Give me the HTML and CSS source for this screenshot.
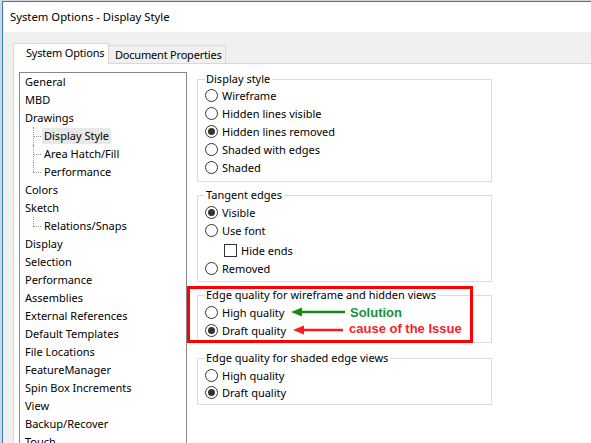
FILE: index.html
```html
<!DOCTYPE html>
<html>
<head>
<meta charset="utf-8">
<link rel="stylesheet" href="styles.css">
</head>
<body>
<div class="screen">
  <div class="window">
    <div class="titlebar">System Options - Display Style</div>
    <div class="dialog">
      <div class="tabs">
        <div class="tab active">System Options</div>
        <div class="tab">Document Properties</div>
      </div>
      <div class="page">
        <ul class="tree">
          <li>General</li>
          <li>MBD</li>
          <li>Drawings</li>
          <li class="child"><span class="sel">Display Style</span></li>
          <li class="child"><span>Area Hatch/Fill</span></li>
          <li class="child last"><span>Performance</span></li>
          <li>Colors</li>
          <li>Sketch</li>
          <li class="child last"><span>Relations/Snaps</span></li>
          <li>Display</li>
          <li>Selection</li>
          <li>Performance</li>
          <li>Assemblies</li>
          <li>External References</li>
          <li>Default Templates</li>
          <li>File Locations</li>
          <li>FeatureManager</li>
          <li>Spin Box Increments</li>
          <li>View</li>
          <li>Backup/Recover</li>
          <li>Touch</li>
        </ul>
        <div class="options">
          <fieldset class="group">
            <legend>Display style</legend>
            <div class="row"><span class="radio"></span>Wireframe</div>
            <div class="row"><span class="radio"></span>Hidden lines visible</div>
            <div class="row"><span class="radio on"></span>Hidden lines removed</div>
            <div class="row"><span class="radio"></span>Shaded with edges</div>
            <div class="row"><span class="radio"></span>Shaded</div>
          </fieldset>
          <fieldset class="group tangent">
            <legend>Tangent edges</legend>
            <div class="row"><span class="radio on"></span>Visible</div>
            <div class="row"><span class="radio"></span>Use font</div>
            <div class="row indent"><span class="check"></span>Hide ends</div>
            <div class="row"><span class="radio"></span>Removed</div>
          </fieldset>
          <div class="mark">
            <fieldset class="group quality">
              <legend>Edge quality for wireframe and hidden views</legend>
              <div class="row"><span class="radio"></span>High quality</div>
              <div class="row"><span class="radio on"></span>Draft quality</div>
            </fieldset>
            <div class="redbox"></div>
            <svg class="arrow green-arrow" width="54" height="10" viewBox="0 0 54 10">
              <path d="M10 5 H54" stroke="#168a16" stroke-width="2.5" fill="none"/>
              <path d="M0 5 L11 0.5 L11 9.5 Z" fill="#168a16"/>
            </svg>
            <svg class="arrow red-arrow" width="50" height="10" viewBox="0 0 50 10">
              <path d="M10 5 H50" stroke="#ff1a1a" stroke-width="2.5" fill="none"/>
              <path d="M0 5 L11 0.5 L11 9.5 Z" fill="#ff1a1a"/>
            </svg>
            <span class="note solution">Solution</span>
            <span class="note cause">cause of the Issue</span>
          </div>
          <fieldset class="group quality last">
            <legend>Edge quality for shaded edge views</legend>
            <div class="row"><span class="radio"></span>High quality</div>
            <div class="row"><span class="radio on"></span>Draft quality</div>
          </fieldset>
        </div>
      </div>
    </div>
  </div>
</div>
</body>
</html>
```
FILE: styles.css
```css
* { box-sizing: border-box; }
html, body { margin: 0; height: 100%; overflow: hidden; }
body {
  background: #d6d6d6;
  font-family: "Noto Sans", "Liberation Sans", sans-serif;
  font-size: 11px;
  color: #000;
}
.screen {
  height: 443px;
  padding: 1px 0 0 2px;
  display: flex;
}
.window {
  flex: 1;
  min-width: 0;
  display: flex;
  flex-direction: column;
  border-top: 1px solid #2b7bd6;
  border-left: 1px solid #2b7bd6;
  background: #f0f0f0;
}
.titlebar {
  height: 30px;
  line-height: 30px;
  padding-left: 7px;
  background: #fff;
  font-size: 11.3px;
}
.dialog {
  flex: 1;
  min-height: 0;
  display: flex;
  flex-direction: column;
  padding: 11px 0 0 10px;
}
.tabs {
  display: flex;
  align-items: flex-end;
  height: 20px;
}
.tab {
  height: 18px;
  line-height: 17px;
  border: 1px solid #d9d9d9;
  border-bottom: none;
  border-left: none;
  background: #f0f0f0;
  width: 117px;
  padding-left: 6px;
  white-space: nowrap;
  letter-spacing: -0.2px;
  overflow: hidden;
}
.tab.active {
  position: relative;
  z-index: 1;
  height: 21px;
  margin-bottom: -1px;
  width: 96px;
  padding-left: 12px;
  line-height: 18px;
  border-left: 1px solid #d9d9d9;
  background: #fff;
}
.page {
  flex: 1;
  min-height: 0;
  display: flex;
  align-items: flex-start;
  gap: 10px;
  padding: 8px 0 0 5px;
  background: #fff;
  border-top: 1px solid #d9d9d9;
  border-left: 1px solid #d9d9d9;
}
.tree {
  flex: none;
  width: 168px;
  height: 400px;
  margin: 0;
  padding: 0;
  list-style: none;
  border: 1px solid #828790;
  background: #fff;
}
.tree li {
  position: relative;
  height: 18px;
  line-height: 18px;
  padding-left: 5px;
  white-space: nowrap;
}
.tree li.child { padding-left: 22px; }
.tree li.child span {
  display: inline-block;
  padding: 0 2px;
  line-height: 16px;
  vertical-align: top;
  margin-top: 1px;
}
.tree li.child span.sel { background: #e8e8e8; }
.tree li.child::before {
  content: "";
  position: absolute;
  left: 13px;
  top: 0;
  bottom: 0;
  border-left: 1px dotted #9a9a9a;
}
.tree li.child.last::before { bottom: 9px; }
.tree li.child::after {
  content: "";
  position: absolute;
  left: 13px;
  top: 9px;
  width: 8px;
  border-top: 1px dotted #9a9a9a;
}
.options {
  flex: none;
  width: 295px;
  display: flex;
  flex-direction: column;
  gap: 6px;
}
.group {
  margin: 0;
  min-width: 0;
  padding: 0 6px 5px 7px;
  border: 1px solid #dcdcdc;
}
.group legend {
  padding: 0 2px 0 1px;
  line-height: 14px;
}
.group.tangent { padding-top: 1px; padding-bottom: 4px; }
.group.quality { padding-top: 1px; padding-bottom: 3px; }
.group.last { margin-top: 2px; padding-top: 2px; }
.row {
  display: flex;
  align-items: center;
  gap: 4px;
  height: 18px;
  white-space: nowrap;
}
.group.last .row { height: 17px; }
.row.indent { padding-left: 19px; margin-top: 2px; }
.radio {
  flex: none;
  width: 13px;
  height: 13px;
  border: 1px solid #333;
  border-radius: 50%;
  background: #fff;
  display: flex;
  align-items: center;
  justify-content: center;
}
.radio.on::after {
  content: "";
  width: 7px;
  height: 7px;
  border-radius: 50%;
  background: #333;
}
.check {
  flex: none;
  width: 13px;
  height: 13px;
  border: 1px solid #333;
  background: #fff;
}
.mark { position: relative; }
.redbox {
  position: absolute;
  left: -10px;
  top: -2px;
  width: 286px;
  height: 57px;
  border: 3px solid #ff0000;
}
.arrow { position: absolute; }
.green-arrow { left: 94px; top: 19px; }
.red-arrow { left: 96px; top: 37px; }
.note {
  position: absolute;
  font-family: "Liberation Sans", Arial, sans-serif;
  font-weight: bold;
  font-size: 13px;
  line-height: 16px;
  white-space: nowrap;
}
.solution { left: 153px; top: 17px; color: #1b8f3f; }
.cause { left: 152px; top: 33px; color: #ff1a2a; }
```
